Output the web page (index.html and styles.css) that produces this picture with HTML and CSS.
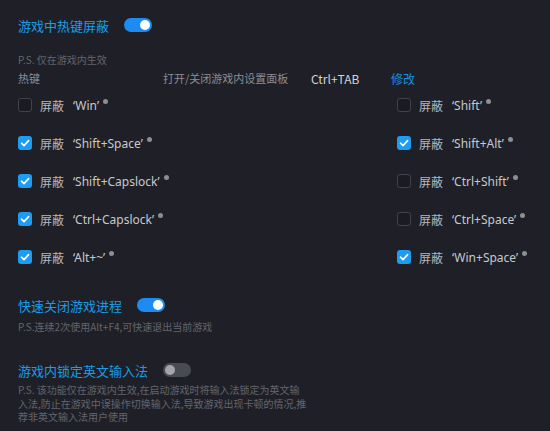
FILE: index.html
```html
<!DOCTYPE html>
<html lang="zh-CN">
<head>
  <meta charset="UTF-8" />
  <title>游戏设置</title>
  <link rel="stylesheet" href="styles.css">
</head>
<body>

  <div class="section">
    <div class="head">
      <span class="title">游戏中热键屏蔽</span>
      <span class="switch on"></span>
    </div>
    <p class="tip first">P.S. 仅在游戏内生效</p>
    <div class="hotkey">
      <span class="hk-label">热键</span>
      <span class="hk-desc">打开/关闭游戏内设置面板</span>
      <span class="hk-key">Ctrl+TAB</span>
      <a class="hk-edit" href="#">修改</a>
    </div>

    <div class="grid">
      <label class="item"><span class="box"></span><span class="word">屏蔽</span><span class="key">‘Win’</span><i class="dot"></i></label>
      <label class="item"><span class="box"></span><span class="word">屏蔽</span><span class="key">‘Shift’</span><i class="dot"></i></label>
      <label class="item"><span class="box checked"><svg viewBox="0 0 14 14"><polyline points="3.5,7.2 6,9.6 10.6,4.6" /></svg></span><span class="word">屏蔽</span><span class="key">‘Shift+Space’</span><i class="dot"></i></label>
      <label class="item"><span class="box checked"><svg viewBox="0 0 14 14"><polyline points="3.5,7.2 6,9.6 10.6,4.6" /></svg></span><span class="word">屏蔽</span><span class="key">‘Shift+Alt’</span><i class="dot"></i></label>
      <label class="item"><span class="box checked"><svg viewBox="0 0 14 14"><polyline points="3.5,7.2 6,9.6 10.6,4.6" /></svg></span><span class="word">屏蔽</span><span class="key">‘Shift+Capslock’</span><i class="dot"></i></label>
      <label class="item"><span class="box"></span><span class="word">屏蔽</span><span class="key">‘Ctrl+Shift’</span><i class="dot"></i></label>
      <label class="item"><span class="box checked"><svg viewBox="0 0 14 14"><polyline points="3.5,7.2 6,9.6 10.6,4.6" /></svg></span><span class="word">屏蔽</span><span class="key">‘Ctrl+Capslock’</span><i class="dot"></i></label>
      <label class="item"><span class="box"></span><span class="word">屏蔽</span><span class="key">‘Ctrl+Space’</span><i class="dot"></i></label>
      <label class="item"><span class="box checked"><svg viewBox="0 0 14 14"><polyline points="3.5,7.2 6,9.6 10.6,4.6" /></svg></span><span class="word">屏蔽</span><span class="key">‘Alt+~’</span><i class="dot"></i></label>
      <label class="item"><span class="box checked"><svg viewBox="0 0 14 14"><polyline points="3.5,7.2 6,9.6 10.6,4.6" /></svg></span><span class="word">屏蔽</span><span class="key">‘Win+Space’</span><i class="dot"></i></label>
    </div>
  </div>

  <div class="section quick">
    <div class="head">
      <span class="title">快速关闭游戏进程</span>
      <span class="switch on"></span>
    </div>
    <p class="tip">P.S.连续2次使用Alt+F4,可快速退出当前游戏</p>
  </div>

  <div class="section lock">
    <div class="head">
      <span class="title">游戏内锁定英文输入法</span>
      <span class="switch"></span>
    </div>
    <p class="tip long">P.S. 该功能仅在游戏内生效,在启动游戏时将输入法锁定为英文输<br>入法,防止在游戏中误操作切换输入法,导致游戏出现卡顿的情况,推<br>荐非英文输入法用户使用</p>
  </div>

</body>
</html>
```

FILE: styles.css
```css
body {
  margin: 0;
  padding: 15px 0 0 18px;
  background: #1f2027;
  font-family: "Noto Sans CJK SC", "Noto Sans", sans-serif;
  color: #b9bbc1;
}
.section { margin: 0; }
.head { display: flex; align-items: center; height: 20px; }
.title { color: #1a9de6; font-size: 13px; }
.switch {
  position: relative;
  width: 28px; height: 14px;
  border-radius: 7px;
  background: #484b53;
  margin-left: 15px;
}
.switch::after {
  content: "";
  position: absolute;
  top: 2px; left: 2px;
  width: 10px; height: 10px;
  border-radius: 50%;
  background: #a4a6ab;
}
.switch.on { background: #1d8bf1; }
.switch.on::after { left: 16px; background: #fff; }

.tip {
  margin: 5px 0 0;
  font-size: 10px;
  line-height: 14px;
  color: #62656d;
}
.tip.first { margin-top: 18px; }
.tip.long { line-height: 13.5px; margin-top: 3px; }

.hotkey {
  display: flex; align-items: center;
  height: 16px; margin-top: 3px;
  font-size: 11px; color: #8b8d94;
}
.hk-label { width: 145px; }
.hk-desc { width: 148px; }
.hk-key { width: 80px; font-size: 12px; color: #d2d3d6; }
.hk-edit { color: #1a8fe0; text-decoration: none; font-size: 12px; }

.grid { display: grid; grid-template-columns: 379px 1fr; }
.item { display: flex; align-items: center; height: 38px; font-size: 12px; }
.box {
  width: 14px; height: 14px;
  box-sizing: border-box;
  border: 1px solid #41434b;
  border-radius: 3px;
  background: #1b1c22;
}
.box.checked { border: none; background: #1e9cf2; }
.box svg { display: block; width: 14px; height: 14px; }
.box polyline { fill: none; stroke: #fff; stroke-width: 1.6; stroke-linecap: round; stroke-linejoin: round; }
.word { margin-left: 8px; color: #b4b6bc; width: 33px; }
.key { color: #c6c8cd; font-family: "Noto Sans", sans-serif; }
.dot {
  width: 5px; height: 5px;
  border-radius: 50%;
  background: #8c8e93;
  margin: -8px 0 0 4px;
}

.quick { margin-top: 19px; }
.lock { margin-top: 26px; }
```
